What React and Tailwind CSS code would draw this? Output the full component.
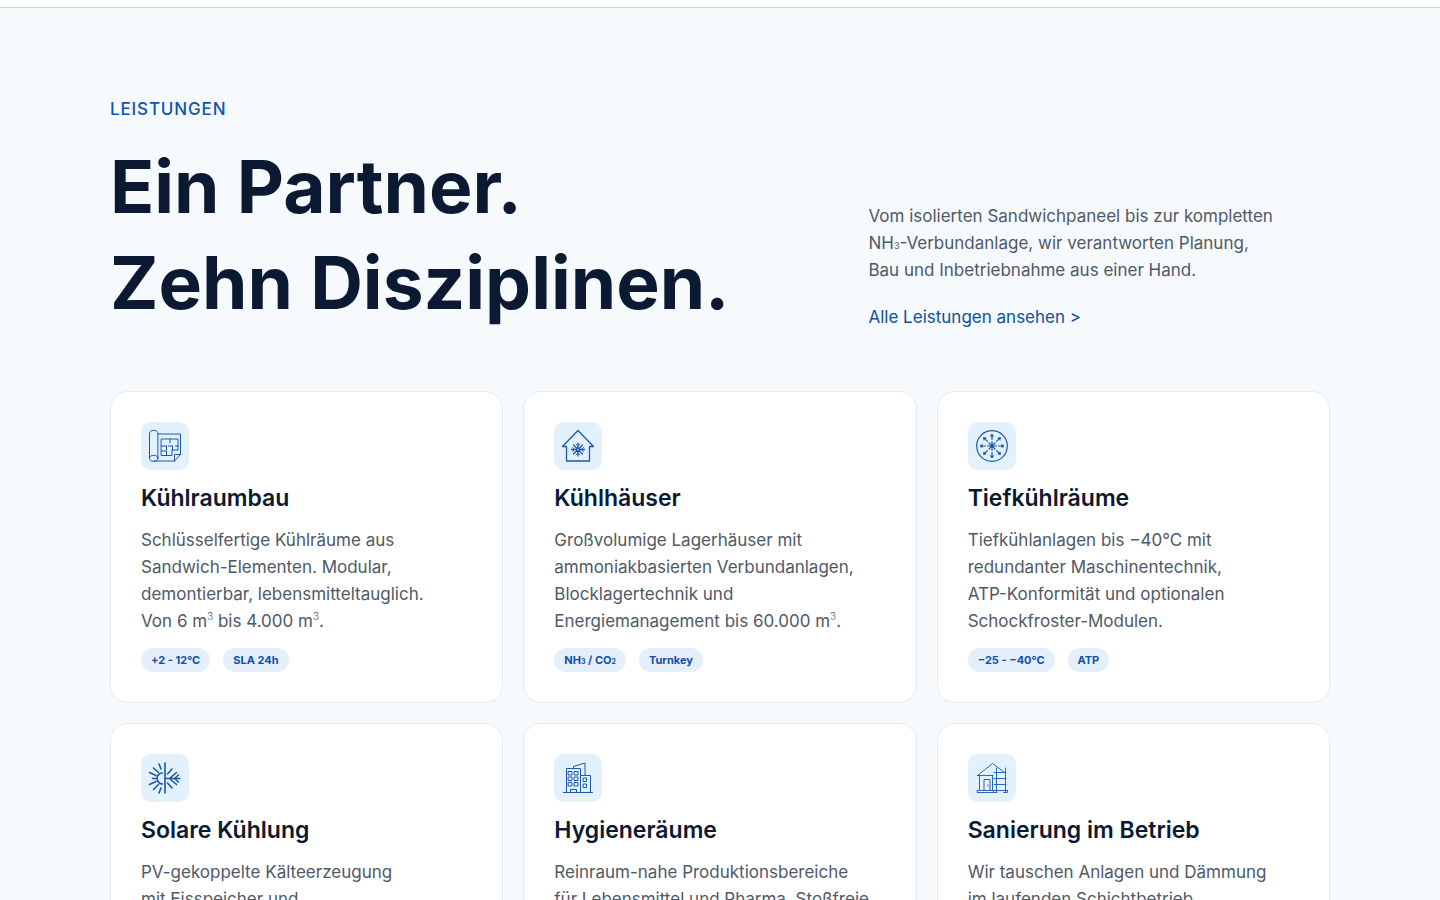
const services = [
  {
    title: 'Kühlraumbau',
    lines: ['Schlüsselfertige Kühlräume aus', 'Sandwich-Elementen. Modular,', 'demontierbar, lebensmitteltauglich.', <>Von 6 m<Cubed /> bis 4.000 m<Cubed />.</>],
    tags: ['+2 - 12°C', 'SLA 24h'],
    Icon: BlueprintIcon,
  },
  {
    title: 'Kühlhäuser',
    lines: ['Großvolumige Lagerhäuser mit', 'ammoniakbasierten Verbundanlagen,', 'Blocklagertechnik und', <>Energiemanagement bis 60.000 m<Cubed />.</>],
    tags: [<>NH<Sub small>3</Sub> / CO<Sub small>2</Sub></>, 'Turnkey'],
    Icon: ColdHouseIcon,
  },
  {
    title: 'Tiefkühlräume',
    lines: ['Tiefkühlanlagen bis −40°C mit', 'redundanter Maschinentechnik,', 'ATP-Konformität und optionalen', 'Schockfroster-Modulen.'],
    tags: ['−25 - −40°C', 'ATP'],
    Icon: FreezeIcon,
  },
  {
    title: 'Solare Kühlung',
    lines: ['PV-gekoppelte Kälteerzeugung', 'mit Eisspeicher und', 'intelligenter Steuerung.'],
    tags: ['PV', 'Eisspeicher'],
    Icon: SolarIcon,
  },
  {
    title: 'Hygieneräume',
    lines: ['Reinraum-nahe Produktionsbereiche', 'für Lebensmittel und Pharma. Stoßfreie', 'Wand- und Deckensysteme.'],
    tags: ['HACCP', 'GMP'],
    Icon: BuildingIcon,
  },
  {
    title: 'Sanierung im Betrieb',
    lines: ['Wir tauschen Anlagen und Dämmung', 'im laufenden Schichtbetrieb.', 'Ohne Stillstand.'],
    tags: ['Retrofit', '24/7'],
    Icon: RenovationIcon,
  },
];

function Cubed() {
  return <sup className="top-0 align-text-top text-[10px] leading-none font-light">3</sup>;
}

function Sub({ children, small }) {
  return (
    <sub className={small ? 'bottom-0 text-[7px] leading-none' : 'bottom-0 text-[9px] leading-none'}>{children}</sub>
  );
}

function IconFrame({ children, strokeWidth = 1 }) {
  return (
    <svg
      viewBox="0 0 48 48"
      className="size-12 rounded-[10px] bg-[#e3f1fd] text-[#1b58a8]"
      fill="none"
      stroke="currentColor"
      strokeWidth={strokeWidth}
      strokeLinecap="round"
      strokeLinejoin="round"
      aria-hidden="true"
    >
      {children}
    </svg>
  );
}

function BlueprintIcon() {
  return (
    <IconFrame>
      <path d="M8.5 36V12a4.2 3.6 0 0 1 8.4 0v24" />
      <ellipse cx="12.7" cy="36.3" rx="4.2" ry="3" />
      <path d="M17 12h22.5v20.5l-6 6.5H13M39.5 32.5h-6V39" />
      <path d="M20.5 17H37v11h-6v5.5H20.5z" />
      <path d="M29 17v4M20.5 24H25M27.5 24h4M34.5 24H37M25.5 24v4M31.5 24v4M20.5 29h5v4" />
    </IconFrame>
  );
}

function ColdHouseIcon() {
  return (
    <IconFrame strokeWidth={1.3}>
      <path d="M12.5 24.5h-4L24 8.5l15.5 16h-4V39h-23z" />
      <path d="M24 21v13M17.5 27.5h13M19.5 23l9 9M28.5 23l-9 9" />
      <path d="M22 22l2 2 2-2M22 33l2-2 2 2M18.5 25.5l2 2-2 2M29.5 25.5l-2 2 2 2" strokeWidth="0.9" />
      <circle cx="24" cy="27.5" r="1.4" fill="#e3f1fd" />
    </IconFrame>
  );
}

function FreezeIcon() {
  return (
    <IconFrame strokeWidth={1.2}>
      <circle cx="24" cy="24" r="15.3" />
      <path d="M24 19.5v9M19.5 24h9M21 21l6 6M27 21l-6 6" />
      {[0, 45, 90, 135, 180, 225, 270, 315].map((angle) => (
        <g key={angle} transform={`rotate(${angle} 24 24)`}>
          <path d="M24 17.5v-5" />
          <path d="M22.5 14l1.5-2 1.5 2z" fill="currentColor" strokeWidth="0.6" />
        </g>
      ))}
    </IconFrame>
  );
}

function SolarIcon() {
  return (
    <IconFrame strokeWidth={1.6}>
      <path d="M24 9v30M21.5 19a5.5 5.5 0 0 0 0 11" />
      <path d="M18 10l2 5M12.5 14l5 4.5M8.5 18.5l6.5 3M11.5 24.5H15M8.5 30.5l6.5-3M12.5 35.5l5-5M18 39l2-5" />
      <path d="M24 24.5h15M28.5 24.5l7-6M28.5 24.5l7 6M33.5 24.5l4-3.5M33.5 24.5l4 3.5M26.5 20l4.5-5M26.5 29l4.5 5" />
    </IconFrame>
  );
}

function BuildingIcon() {
  return (
    <IconFrame>
      <path d="M9.5 38.5h29M12.5 38.5v-24h14v24M26.5 21.5h10v17M19.5 14.5v-2L31 9v12.5" />
      <path d="M14.5 17.5H18V21h-3.5zM20.5 17.5H24V21h-3.5zM14.5 23H18v3.5h-3.5zM20.5 23H24v3.5h-3.5zM14.5 28.5H18V32h-3.5zM20.5 28.5H24V32h-3.5z" />
      <path d="M16.5 38.5v-3h6v3M29.5 24h3v3.5h-3zM29.5 30h3v3.5h-3z" />
    </IconFrame>
  );
}

function RenovationIcon() {
  return (
    <IconFrame strokeWidth={0.9}>
      <path d="M9.5 21.5l15-12L36 18M9.5 21.5H25M11.5 21.5v15M24.5 21.5v15M16 36.5v-11h6v11M20 31v1" />
      <path d="M9.5 36.5h16v2h-16zM28.5 14v24M37.5 14v24M26 18.5h12M26 24.5h12M26 30.5h12M26 36.5h13.5M26 38.5h3M35.5 38.5h4v-2" />
    </IconFrame>
  );
}

function ServiceCard({ title, lines, tags, Icon }) {
  return (
    <article className="rounded-[18px] border border-[#e6ebf0] bg-white p-[30px]">
      <Icon />
      <h3 className="mt-2.5 text-[23px] leading-9 font-semibold text-[#0b1933]">{title}</h3>
      <p className="mt-[11px] text-[17px] leading-[27px] text-[#4f5966]">
        {lines.map((line, i) => (
          <span key={i} className="block whitespace-nowrap">{line}</span>
        ))}
      </p>
      <ul className="mt-[13px] flex flex-wrap gap-[13px]">
        {tags.map((tag, i) => (
          <li key={i} className="rounded-full bg-[#e5effc] px-2.5 text-[11px] leading-6 font-bold text-[#0f4fa8]">
            {tag}
          </li>
        ))}
      </ul>
    </article>
  );
}

export default function App() {
  return (
    <div className="min-h-screen bg-white pt-[7px] font-['Inter','Liberation_Sans',sans-serif]">
      <section className="border-t border-[#c9d3da] bg-[#f6fafd] px-10 pt-[88px] pb-20">
        <div className="mx-auto max-w-[1220px]">
          <header className="grid grid-cols-[1.6fr_1fr] items-end gap-5">
            <div>
              <p className="text-[17px] leading-[27px] font-medium tracking-wider text-[#0f55ad] uppercase">Leistungen</p>
              <h2 className="mt-4 text-[73px] leading-[96px] font-bold text-[#0b1933]">
                Ein Partner.
                <br />
                Zehn Disziplinen.
              </h2>
            </div>
            <div className="text-[17px] leading-[27px]">
              <p className="text-[#4f5966]">
                Vom isolierten Sandwichpaneel bis zur kompletten
                <br />
                NH<Sub>3</Sub>-Verbundanlage, wir verantworten Planung,
                <br />
                Bau und Inbetriebnahme aus einer Hand.
              </p>
              <a href="#leistungen" className="mt-5 inline-block text-[#0f4f9f]">Alle Leistungen ansehen &gt;</a>
            </div>
          </header>
          <div id="leistungen" className="mt-[60px] grid grid-cols-3 gap-5">
            {services.map((service) => (
              <ServiceCard key={service.title} {...service} />
            ))}
          </div>
        </div>
      </section>
    </div>
  );
}
